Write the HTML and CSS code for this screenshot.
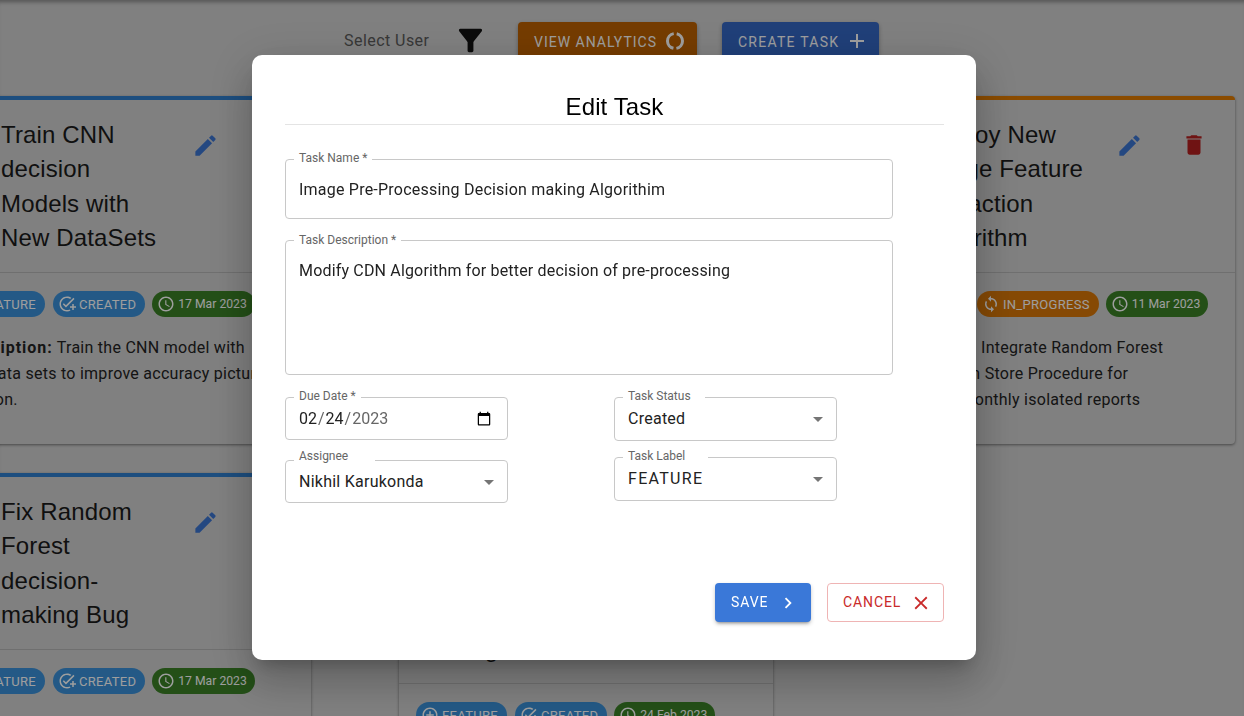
FILE: index.html
```html
<!DOCTYPE html>
<html lang="en">
<head>
  <meta charset="UTF-8" />
  <meta name="viewport" content="width=device-width, initial-scale=1.0">
  <title>Task Board</title>

  <link rel="stylesheet" href="styles.css">
</head>
<body>

  <!-- Shared icons -->
  <svg class="sprite" width="0" height="0">
    <symbol id="i-edit" viewBox="0 0 24 24"><path d="M3 17.25V21h3.75L17.81 9.94l-3.75-3.75L3 17.25zM20.71 7.04c.39-.39.39-1.02 0-1.41l-2.34-2.34a.9959.9959 0 0 0-1.41 0l-1.83 1.83 3.75 3.75 1.83-1.83z"/></symbol>
    <symbol id="i-delete" viewBox="0 0 24 24"><path d="M6 19c0 1.1.9 2 2 2h8c1.1 0 2-.9 2-2V7H6v12zM19 4h-3.5l-1-1h-5l-1 1H5v2h14V4z"/></symbol>
    <symbol id="i-feature" viewBox="0 0 24 24"><path d="M12 2C6.48 2 2 6.48 2 12s4.48 10 10 10 10-4.48 10-10S17.52 2 12 2zm0 18c-4.41 0-8-3.59-8-8s3.59-8 8-8 8 3.59 8 8-3.59 8-8 8zm1-13h-2v4H7v2h4v4h2v-4h4v-2h-4z"/></symbol>
    <symbol id="i-created" viewBox="0 0 24 24"><path d="M22 5.18 10.59 16.6l-4.24-4.24 1.41-1.41 2.83 2.83 10-10L22 5.18zM12 20c-4.41 0-8-3.59-8-8s3.59-8 8-8c1.57 0 3.04.46 4.28 1.25l1.45-1.45C16.1 2.67 14.13 2 12 2 6.48 2 2 6.48 2 12s4.48 10 10 10c1.73 0 3.36-.44 4.78-1.22l-1.5-1.5c-1 .46-2.11.72-3.28.72zm7-5h-3v2h3v3h2v-3h3v-2h-3v-3h-2v3z"/></symbol>
    <symbol id="i-time" viewBox="0 0 24 24"><path d="M11.99 2C6.47 2 2 6.48 2 12s4.47 10 9.99 10C17.52 22 22 17.52 22 12S17.52 2 11.99 2zM12 20c-4.42 0-8-3.58-8-8s3.58-8 8-8 8 3.58 8 8-3.58 8-8 8zm.5-13H11v6l5.25 3.15.75-1.23-4.5-2.67z"/></symbol>
    <symbol id="i-sync" viewBox="0 0 24 24"><path d="M12 4V1L8 5l4 4V6c3.31 0 6 2.69 6 6 0 1.01-.25 1.97-.7 2.8l1.46 1.46C19.54 15.03 20 13.57 20 12c0-4.42-3.58-8-8-8zm0 14c-3.31 0-6-2.69-6-6 0-1.01.25-1.97.7-2.8L5.24 7.74C4.46 8.97 4 10.43 4 12c0 4.42 3.58 8 8 8v3l4-4-4-4v3z"/></symbol>
    <symbol id="i-caret" viewBox="0 0 24 24"><path d="M7 10l5 5 5-5z"/></symbol>
  </svg>

  <!-- Board behind the dialog -->
  <div class="page">
    <div class="toolbar">
      <span class="select-user">Select User</span>
      <svg class="filter-icon" viewBox="0 0 24 24"><path d="M4.25 5.61C6.27 8.2 10 13 10 13v6c0 .55.45 1 1 1h2c.55 0 1-.45 1-1v-6s3.72-4.8 5.74-7.39c.51-.66.04-1.61-.79-1.61H5.04c-.83 0-1.3.95-.79 1.61z"/></svg>
      <button class="tool-btn btn-analytics"><span class="btn-text">VIEW ANALYTICS</span>
        <svg class="btn-icon" viewBox="0 0 24 24"><circle cx="12" cy="12" r="7.5" fill="none" stroke="currentColor" stroke-width="3" stroke-dasharray="20.5 3.06" stroke-dashoffset="10.25"/></svg>
      </button>
      <button class="tool-btn btn-create"><span class="btn-text">CREATE TASK</span>
        <svg class="btn-icon" viewBox="0 0 24 24"><path fill="currentColor" d="M19 13h-6v6h-2v-6H5v-2h6V5h2v6h6v2z"/></svg>
      </button>
    </div>

    <div class="board">
      <!-- Row 1 -->
      <div class="task-card">
        <div class="task-head">
          <h3 class="task-title">Train CNN decision Models with New DataSets</h3>
          <svg class="action-icon edit"><use href="#i-edit"/></svg>
        </div>
        <div class="chips">
          <span class="chip chip-blue"><svg><use href="#i-feature"/></svg>FEATURE</span>
          <span class="chip chip-blue"><svg><use href="#i-created"/></svg>CREATED</span>
          <span class="chip chip-green"><svg><use href="#i-time"/></svg>17 Mar 2023</span>
        </div>
        <p class="task-desc"><b>Description:</b> Train the CNN model with new data sets to improve accuracy picture location.</p>
      </div>

      <div class="task-card">
        <div class="task-head">
          <h3 class="task-title">Update Training Data for Decision Models</h3>
          <svg class="action-icon edit"><use href="#i-edit"/></svg>
        </div>
        <div class="chips">
          <span class="chip chip-blue"><svg><use href="#i-feature"/></svg>FEATURE</span>
          <span class="chip chip-blue"><svg><use href="#i-created"/></svg>CREATED</span>
          <span class="chip chip-green"><svg><use href="#i-time"/></svg>20 Mar 2023</span>
        </div>
        <p class="task-desc"><b>Description:</b> Refresh the training data used by the decision models.</p>
      </div>

      <div class="task-card card-orange">
        <div class="task-head">
          <h3 class="task-title">Deploy New Image Feature Extraction Algorithm</h3>
          <svg class="action-icon edit"><use href="#i-edit"/></svg>
          <svg class="action-icon delete"><use href="#i-delete"/></svg>
        </div>
        <div class="chips">
          <span class="chip chip-orange"><svg><use href="#i-feature"/></svg>FEATURE</span>
          <span class="chip chip-orange"><svg><use href="#i-sync"/></svg>IN_PROGRESS</span>
          <span class="chip chip-green"><svg><use href="#i-time"/></svg>11 Mar 2023</span>
        </div>
        <p class="task-desc"><b>Description:</b> Integrate Random Forest Algorithims in Store Procedure for generating monthly isolated reports</p>
      </div>

      <!-- Row 2 -->
      <div class="task-card">
        <div class="task-head">
          <h3 class="task-title">Fix Random Forest decision-making Bug</h3>
          <svg class="action-icon edit"><use href="#i-edit"/></svg>
        </div>
        <div class="chips">
          <span class="chip chip-blue"><svg><use href="#i-feature"/></svg>FEATURE</span>
          <span class="chip chip-blue"><svg><use href="#i-created"/></svg>CREATED</span>
          <span class="chip chip-green"><svg><use href="#i-time"/></svg>17 Mar 2023</span>
        </div>
      </div>

      <div class="task-card">
        <div class="task-head">
          <h3 class="task-title">Image Pre-Processing Decision making Algorithim</h3>
          <svg class="action-icon edit"><use href="#i-edit"/></svg>
        </div>
        <div class="chips">
          <span class="chip chip-blue"><svg><use href="#i-feature"/></svg>FEATURE</span>
          <span class="chip chip-blue"><svg><use href="#i-created"/></svg>CREATED</span>
          <span class="chip chip-green"><svg><use href="#i-time"/></svg>24 Feb 2023</span>
        </div>
      </div>
    </div>
  </div>

  <!-- Edit Task dialog -->
  <div class="backdrop">
    <div class="modal">
      <h2 class="modal-title">Edit Task</h2>

      <form class="edit-form">
        <div class="field field-name">
          <label for="taskName">Task Name *</label>
          <input type="text" id="taskName" value="Image Pre-Processing Decision making Algorithim" />
        </div>

        <div class="field field-desc">
          <label for="taskDesc">Task Description *</label>
          <textarea id="taskDesc">Modify CDN Algorithm for better decision of pre-processing</textarea>
        </div>

        <div class="form-columns">
          <div class="form-col col-left">
            <div class="field field-date">
              <label for="dueDate">Due Date *</label>
              <input type="date" id="dueDate" value="2023-02-24" />
            </div>
            <div class="field field-select field-assignee">
              <span class="field-label">Assignee</span>
              <span class="select-value">Nikhil Karukonda</span>
              <svg class="caret"><use href="#i-caret"/></svg>
            </div>
          </div>
          <div class="form-col col-right">
            <div class="field field-select field-status">
              <span class="field-label">Task Status</span>
              <span class="select-value">Created</span>
              <svg class="caret"><use href="#i-caret"/></svg>
            </div>
            <div class="field field-select field-tasklabel">
              <span class="field-label">Task Label</span>
              <span class="select-value">FEATURE</span>
              <svg class="caret"><use href="#i-caret"/></svg>
            </div>
          </div>
        </div>

        <div class="modal-actions">
          <button type="button" class="btn-save">SAVE
            <svg viewBox="0 0 24 24"><path fill="currentColor" d="M10 6 8.59 7.41 13.17 12l-4.58 4.59L10 18l6-6z"/></svg>
          </button>
          <button type="button" class="btn-cancel">CANCEL
            <svg viewBox="0 0 24 24"><path fill="currentColor" d="M19 6.41 17.59 5 12 10.59 6.41 5 5 6.41 10.59 12 5 17.59 6.41 19 12 13.41 17.59 19 19 17.59 13.41 12z"/></svg>
          </button>
        </div>
      </form>
    </div>
  </div>

</body>
</html>
```

FILE: styles.css
```css
:root {
  --blue-bar: #2f7fce;
  --orange: #e07b00;
  --page-bg: #cfcfcf;
  --field-border: #c8c8c8;
}

* {
  box-sizing: border-box;
  margin: 0;
  padding: 0;
}

body {
  font-family: Roboto, sans-serif;
  height: 716px;
  overflow: hidden;
  background: var(--page-bg);
}

.sprite {
  position: absolute;
}

/* Board behind dialog */
.page {
  height: 716px;
  padding-top: 22px;
  overflow: hidden;
  box-shadow: inset 0 5px 4px -3px rgba(0, 0, 0, 0.35);
}

.toolbar {
  display: flex;
  align-items: center;
  height: 38px;
  padding-left: 344px;
}

.select-user {
  font-size: 16px;
  letter-spacing: 0.45px;
  color: #5a5a5a;
  width: 109px;
  margin-top: -2px;
}

.filter-icon {
  width: 35px;
  height: 35px;
  margin-top: -2px;
  fill: #111;
}

.tool-btn {
  display: flex;
  align-items: center;
  gap: 6px;
  height: 38px;
  border: none;
  border-radius: 4px;
  font-family: Roboto, sans-serif;
  font-size: 14px;
  letter-spacing: 1px;
  color: #fff;
  padding: 0 12px 0 16px;
  box-shadow: 0 2px 4px rgba(0, 0, 0, 0.3);
  white-space: nowrap;
}

.btn-text {
  padding-top: 2px;
}

.btn-icon {
  width: 24px;
  height: 24px;
  flex-shrink: 0;
}

.btn-analytics {
  width: 179px;
  margin-left: 30px;
  background: #bd6100;
}

.btn-create {
  width: 157px;
  margin-left: 25px;
  background: #3467c4;
  letter-spacing: 1.25px;
}

.board {
  display: grid;
  grid-template-columns: repeat(3, 374px);
  column-gap: 88px;
  row-gap: 29px;
  margin: 36px 0 0 -63px;
}

.task-card {
  background: var(--page-bg);
  border-top: 4px solid var(--blue-bar);
  border-radius: 4px;
  box-shadow: 0 1px 3px rgba(0, 0, 0, 0.45);
  height: 348px;
  padding-bottom: 20px;
}

.card-orange {
  border-top-color: var(--orange);
}

.task-head {
  display: flex;
  align-items: flex-start;
  padding: 18px 16px 17px 64px;
  border-bottom: 1px solid #b4b4b4;
}

.task-title {
  width: 160px;
  font-family: "Liberation Sans", Arial, sans-serif;
  font-size: 24px;
  font-weight: 400;
  line-height: 34.3px;
  letter-spacing: 0.15px;
  color: #1a1a1a;
}

.action-icon {
  flex-shrink: 0;
  margin-top: 14px;
}

.action-icon.edit {
  width: 27px;
  height: 27px;
  fill: #3b74d0;
  margin-left: 31px;
}

.action-icon.delete {
  width: 26px;
  height: 26px;
  fill: #b3201f;
  margin-left: 38px;
}

.chips {
  display: flex;
  gap: 8px;
  padding: 18px 17px 0;
}

.chip {
  display: inline-flex;
  align-items: center;
  gap: 3px;
  height: 26px;
  padding: 0 9px 0 5px;
  border-radius: 13px;
  font-size: 13px;
  letter-spacing: 0.3px;
  color: #fff;
  white-space: nowrap;
}

.chip svg {
  width: 18px;
  height: 18px;
  fill: currentColor;
}

.chip-blue {
  background: #3a90d8;
}

.chip-orange {
  background: #d87708;
}

.chip-green {
  background: #3a8026;
  font-size: 12.2px;
  letter-spacing: 0;
  margin-left: -1px;
  padding-right: 8px;
}

.task-desc {
  padding: 18px 38px 0 17px;
  font-size: 16px;
  line-height: 26px;
  letter-spacing: 0.27px;
  color: #222;
}

.task-desc b {
  letter-spacing: 1px;
}

/* Dialog */
.backdrop {
  position: fixed;
  top: 0;
  left: 0;
  width: 100%;
  height: 100%;
  padding: 55px 0 0 252px;
  background: rgba(0, 0, 0, 0.38);
}

.modal {
  width: 724px;
  height: 605px;
  padding: 38px 32px 38px 33px;
  background: #fff;
  border-radius: 10px;
  box-shadow: 0 11px 15px -7px rgba(0, 0, 0, 0.2), 0 24px 38px 3px rgba(0, 0, 0, 0.14), 0 9px 46px 8px rgba(0, 0, 0, 0.12);
}

.modal-title {
  font-family: "Liberation Sans", Arial, sans-serif;
  font-size: 24px;
  font-weight: 400;
  line-height: 28px;
  letter-spacing: 0.1px;
  text-align: center;
  color: #000;
  padding-bottom: 3px;
  border-bottom: 1px solid #e4e4e4;
  margin-bottom: 34px;
}

.field {
  position: relative;
  border: 1px solid var(--field-border);
  border-radius: 4px;
  background: #fff;
}

.field label,
.field-label {
  position: absolute;
  top: -9px;
  left: 8px;
  padding: 0 5px;
  background: #fff;
  font-size: 12px;
  line-height: 14px;
  color: #666;
}

.field-desc label {
  top: -8px;
}

.field-assignee .field-label {
  top: -12px;
  padding-right: 27px;
}

.field-status .field-label {
  padding-right: 14px;
}

.field-tasklabel .field-label {
  padding-right: 23px;
}

.field input,
.field textarea {
  display: block;
  width: 100%;
  border: none;
  outline: none;
  background: transparent;
  font-family: Roboto, sans-serif;
  font-size: 16px;
  letter-spacing: 0.22px;
  color: #222;
}

.field-name {
  width: 608px;
  height: 60px;
  padding: 0 13px;
  display: flex;
  align-items: center;
}

.field-desc {
  width: 608px;
  height: 135px;
  margin-top: 21px;
  padding: 18px 13px;
}

.field-desc textarea {
  height: 90px;
  resize: none;
  line-height: 23px;
  letter-spacing: 0.17px;
}

.form-columns {
  display: flex;
  gap: 106px;
  margin-top: 22px;
}

.form-col {
  display: flex;
  flex-direction: column;
  width: 223px;
}

.col-left {
  gap: 20px;
}

.col-right {
  gap: 16px;
}

.col-right .select-value {
  margin-top: -2px;
}

.field-date {
  height: 43px;
  padding: 0 13px 0 12px;
  display: flex;
  align-items: center;
}

.field-date input {
  letter-spacing: 0;
}

.field-date input::-webkit-datetime-edit-year-field,
.field-date input::-webkit-datetime-edit-text {
  color: #666;
}

.field-select {
  display: flex;
  align-items: center;
  justify-content: space-between;
  height: 44px;
  padding: 0 6px 0 13px;
}

.field-assignee {
  height: 43px;
}

.select-value {
  font-size: 16px;
  letter-spacing: 0.25px;
  color: #222;
}

.field-tasklabel .select-value {
  letter-spacing: 1.3px;
}

.caret {
  width: 24px;
  height: 24px;
  fill: #757575;
}

.modal-actions {
  display: flex;
  justify-content: flex-end;
  gap: 16px;
  width: 659px;
  margin-top: 80px;
}

.modal-actions button {
  display: flex;
  align-items: center;
  gap: 9px;
  height: 39px;
  padding-bottom: 2px;
  border-radius: 4px;
  font-family: Roboto, sans-serif;
  font-size: 14px;
  letter-spacing: 0.9px;
}

.modal-actions svg {
  width: 22px;
  height: 22px;
  margin-top: 2px;
}

.btn-save {
  width: 96px;
  padding-left: 16px;
  border: none;
  background: #3a78d8;
  color: #fff;
  box-shadow: 0 3px 3px -2px rgba(0, 0, 0, 0.3), 0 2px 4px rgba(0, 0, 0, 0.2);
}

.btn-cancel {
  width: 117px;
  padding-left: 15px;
  border: 1px solid #efb4b4;
  background: #fff;
  color: #c92a2a;
}
```
